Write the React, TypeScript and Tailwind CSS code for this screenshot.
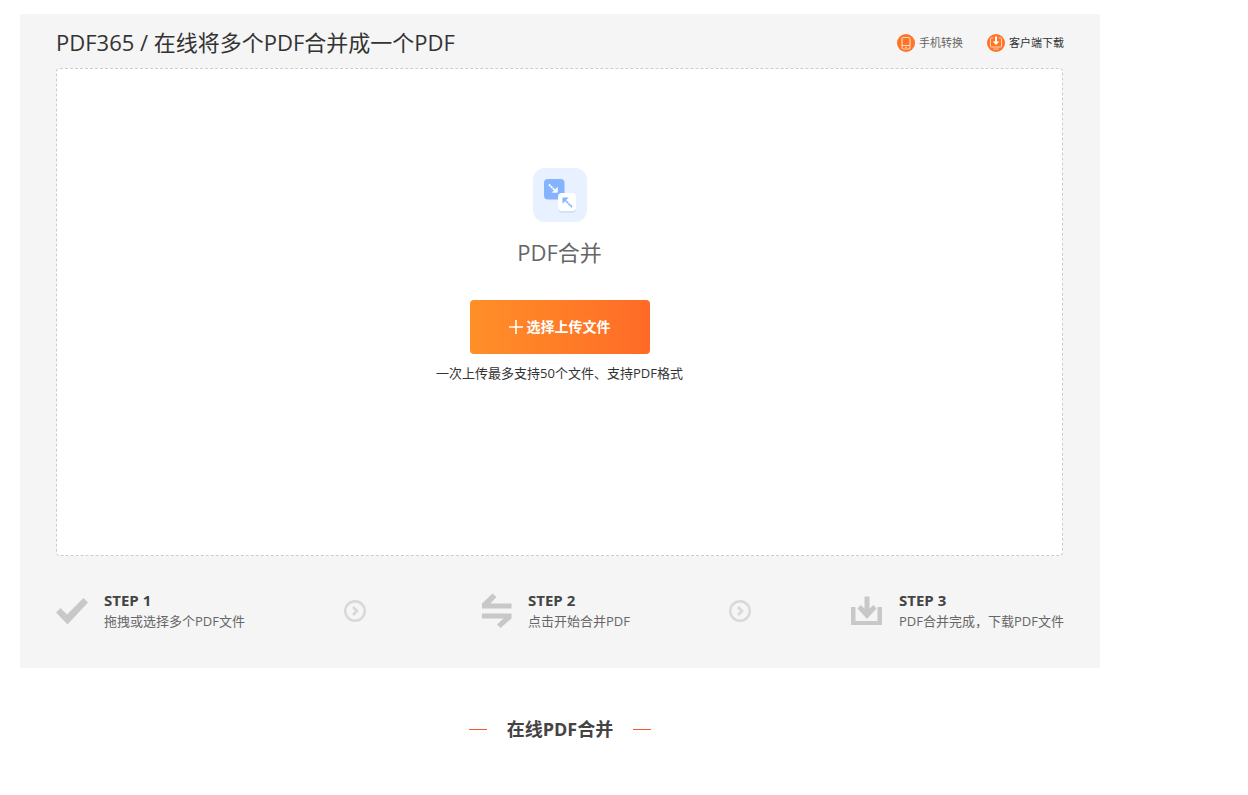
import type { ReactNode } from 'react';

interface StepProps {
  icon: ReactNode;
  title: string;
  text: string;
}

const Step = ({ icon, title, text }: StepProps) => (
  <li className="flex items-center whitespace-nowrap">
    {icon}
    <div className="ml-4">
      <h3 className="text-[15px] leading-5 font-bold text-[#444]">{title}</h3>
      <p className="text-[13px] leading-[22px] text-[#666]">{text}</p>
    </div>
  </li>
);

const StepArrow = () => (
  <li aria-hidden="true">
    <svg className="w-[22px] h-[22px]" viewBox="0 0 22 22" fill="none" stroke="#d8d8d8">
      <circle cx="11" cy="11" r="9.8" strokeWidth="2.4" />
      <path d="M9 7l4 4-4 4" strokeWidth="2.6" />
    </svg>
  </li>
);

const CheckIcon = () => (
  <svg className="w-8 h-9 shrink-0" viewBox="0 0 32 36" fill="#c8c8c8">
    <path d="M0 19.5L4.5 15 11 21.5 27.5 5 32 9.5 11.5 31.5z" />
  </svg>
);

const SwapIcon = () => (
  <svg className="w-[30px] h-9 shrink-0" viewBox="0 0 30 36" fill="#c8c8c8">
    <path d="M0 10.5L10.5 0.5 14.5 4 8.5 10.5H29.5V15.5H0z" />
    <path d="M0 20.5H29.5V25.5L18.5 35 15 31.5 21.5 25.5H0z" />
  </svg>
);

const SaveIcon = () => (
  <svg className="w-8 h-9 shrink-0" viewBox="0 0 32 36" fill="#c8c8c8">
    <path d="M0 14h4.5v14h22V14H31v18H0z" />
    <path d="M13.5 3.5h5v12l4-3.5 3 3.5L16 26 6.5 15.5 9.5 12l4 3.5z" />
  </svg>
);

const PhoneBadge = () => (
  <svg className="w-[18px] h-[18px]" viewBox="0 0 18 18" fill="none">
    <circle cx="9" cy="9" r="9" fill="#ff7427" />
    <rect x="5" y="3.5" width="8" height="11.5" rx="1.5" stroke="#ffd5bc" strokeWidth="1.2" />
    <path d="M5 11.5h8M8 13.3h2" stroke="#ffd5bc" />
  </svg>
);

const DownloadBadge = () => (
  <svg className="w-[18px] h-[18px]" viewBox="0 0 18 18" fill="none">
    <circle cx="9" cy="9" r="9" fill="#ff7427" />
    <path d="M6.2 4H4.5A1 1 0 0 0 3.5 5v7a1 1 0 0 0 1 1h9a1 1 0 0 0 1-1V5a1 1 0 0 0-1-1h-1.7M6.5 15h5" stroke="#ffd5bc" />
    <path d="M9 2.5v6" stroke="#fff" strokeWidth="2" />
    <path d="M5.8 7.5h6.4L9 11z" fill="#fff" />
  </svg>
);

const MergeIcon = () => (
  <svg className="w-[54px] h-[54px]" viewBox="0 0 54 54" fill="none">
    <rect width="54" height="54" rx="12" fill="#e8f1ff" />
    <rect x="11" y="11" width="20.5" height="20.5" rx="4" fill="#85b3ff" />
    <rect x="25.5" y="27.5" width="17.5" height="17.5" rx="4" fill="#d2e2fc" />
    <rect x="25" y="25" width="18" height="18" rx="4" fill="#fff" />
    <path d="M16 16.5l5.5 5.5" stroke="#fff" strokeWidth="1.8" strokeDasharray="2.2 0.5" />
    <path d="M24.3 19.5v4.8h-4.8z" fill="#fff" stroke="#fff" strokeWidth="0.8" />
    <path d="M39 39l-6.5-6.5" stroke="#85b3ff" strokeWidth="1.8" strokeDasharray="2.2 0.5" />
    <path d="M29.5 29.5h6.2l-6.2 6.2z" fill="#85b3ff" />
  </svg>
);

export default function App() {
  return (
    <main className="bg-white px-5 pt-3.5 font-['Open_Sans','Noto_Sans_CJK_SC',sans-serif] text-[#333]">
      <div className="w-full max-w-[1080px]">
        <section className="bg-[#f5f5f5] px-9 pb-9">
          {/* Title bar */}
          <header className="flex h-[54px] items-center justify-between pt-1">
            <h1 className="pb-0.5 text-[22px] leading-8">PDF365 / 在线将多个PDF合并成一个PDF</h1>
            <nav className="flex gap-6 text-[11px] leading-4">
              <a href="#mobile" className="flex items-center gap-1 text-[#666]">
                <PhoneBadge />
                手机转换
              </a>
              <a href="#client" className="flex items-center gap-1">
                <DownloadBadge />
                客户端下载
              </a>
            </nav>
          </header>

          {/* Upload area */}
          <div className="mr-px flex h-[488px] flex-col items-center rounded border border-dashed border-[#ccc] bg-white pt-[99px]">
            <MergeIcon />
            <h2 className="mt-3.5 text-[22px] leading-8 text-[#666]">PDF合并</h2>
            <button
              type="button"
              className="mt-8 flex h-[54px] w-[180px] items-center justify-center gap-1 rounded bg-linear-to-r from-[#ff8f28] to-[#ff6a26] text-sm font-bold text-white"
            >
              <svg className="w-3.5 h-3.5" viewBox="0 0 14 14" stroke="#fff" strokeWidth="1.6">
                <path d="M7 0v14M0 7h14" />
              </svg>
              选择上传文件
            </button>
            <p className="mt-2 text-[13px] leading-[22px]">一次上传最多支持50个文件、支持PDF格式</p>
          </div>

          {/* Steps */}
          <ol className="mt-[34px] grid grid-cols-[288fr_138fr_247fr_122fr_213fr] items-center">
            <Step icon={<CheckIcon />} title="STEP 1" text="拖拽或选择多个PDF文件" />
            <StepArrow />
            <Step icon={<SwapIcon />} title="STEP 2" text="点击开始合并PDF" />
            <StepArrow />
            <Step icon={<SaveIcon />} title="STEP 3" text="PDF合并完成，下载PDF文件" />
          </ol>
        </section>

        <div className="flex items-center justify-center gap-5 pt-[47px]">
          <span className="h-px w-[18px] bg-[#ff5722]" />
          <h2 className="text-lg leading-7 font-bold text-[#444]">在线PDF合并</h2>
          <span className="h-px w-[18px] bg-[#ff5722]" />
        </div>
      </div>
    </main>
  );
}
